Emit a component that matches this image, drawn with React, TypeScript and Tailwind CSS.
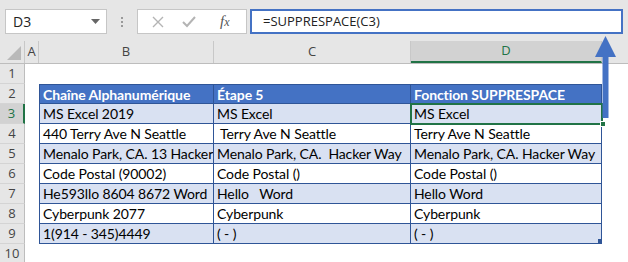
const rows: { b: string; c: string; d: string }[] = [
  { b: 'MS Excel 2019', c: 'MS Excel', d: 'MS Excel' },
  { b: '440 Terry Ave N Seattle', c: ' Terry Ave N Seattle', d: 'Terry Ave N Seattle' },
  { b: 'Menalo Park, CA. 13 Hacker Way', c: 'Menalo Park, CA.  Hacker Way', d: 'Menalo Park, CA. Hacker Way' },
  { b: 'Code Postal (90002)', c: 'Code Postal ()', d: 'Code Postal ()' },
  { b: 'He593llo 8604 8672 Word', c: 'Hello   Word', d: 'Hello Word' },
  { b: 'Cyberpunk 2077', c: 'Cyberpunk', d: 'Cyberpunk' },
  { b: '1(914 - 345)4449', c: '( - )', d: '( - )' },
]

const cellFont = "font-['Lato','Liberation_Sans',sans-serif] text-[14px] tracking-[-0.1px] whitespace-pre overflow-hidden"

function RowHead({ n, active }: { n: number; active?: boolean }) {
  return (
    <div
      className={
        'h-[20px] flex items-center justify-center border-b border-[#d4d4d4] text-[13px] ' +
        (active
          ? 'bg-[#d2d2d2] text-[#217346] border-r-2 border-r-[#217346]'
          : 'bg-[#e6e6e6] text-[#444] border-r border-r-[#bdbdbd]')
      }
    >
      {n}
    </div>
  )
}

export default function App() {
  return (
    <div className="relative w-[628px] h-[262px] overflow-hidden bg-white font-['Open_Sans','Noto_Sans',sans-serif]">
      {/* formula bar */}
      <div className="h-[41px] bg-[#e6e6e6] flex items-start pt-[9px] pl-[5px]">
        <div className="w-[102px] h-[25px] bg-white border border-[#c6c6c6] flex items-center justify-between pl-[7px] pr-[6px] text-[14px] text-[#222]">
          <span>D3</span>
          <svg width="9" height="5" viewBox="0 0 9 5">
            <path d="M0 0h9L4.5 5z" fill="#666" />
          </svg>
        </div>
        <div className="w-[30px] h-[25px] flex flex-col items-center justify-center gap-[2px]">
          <span className="w-[2px] h-[2px] bg-[#999]" />
          <span className="w-[2px] h-[2px] bg-[#999]" />
          <span className="w-[2px] h-[2px] bg-[#999]" />
        </div>
        <div className="w-[110px] h-[25px] bg-white border border-[#c6c6c6] flex items-center pl-[14px] gap-[18px]">
          <svg width="12" height="12" viewBox="0 0 12 12">
            <path d="M1 1l10 10M11 1L1 11" stroke="#b4b4b4" strokeWidth="1.4" />
          </svg>
          <svg width="14" height="12" viewBox="0 0 14 12">
            <path d="M1 6l4 4 8-9" stroke="#b4b4b4" strokeWidth="2" fill="none" />
          </svg>
          <span className="ml-[6px] font-['Liberation_Serif',serif] italic text-[15px] text-[#555]">
            f<span className="text-[12px]">x</span>
          </span>
        </div>
        <div className="ml-[3px] w-[373px] h-[25px] bg-white border-2 border-[#4472c4] flex items-center pl-[11px] text-[13px] text-[#222] font-['Open_Sans','Liberation_Sans',sans-serif]">
          =SUPPRESPACE(C3)
        </div>
      </div>

      {/* column headers */}
      <div className="h-[23px] flex bg-[#e6e6e6] border-b border-[#bdbdbd] text-[13px] text-[#444]">
        <div className="w-[25px] border-r border-[#c8c8c8] flex items-end justify-end p-[3px]">
          <svg width="14" height="14" viewBox="0 0 14 14">
            <path d="M14 0v14H0z" fill="#b9b9b9" />
          </svg>
        </div>
        <div className="w-[14px] border-r border-[#c8c8c8] flex items-center justify-center">A</div>
        <div className="w-[175px] border-r border-[#c8c8c8] flex items-center justify-center">B</div>
        <div className="w-[197px] border-r border-[#c8c8c8] flex items-center justify-center">C</div>
        <div className="w-[191px] bg-[#d2d2d2] border-r border-[#c8c8c8] border-b-2 border-b-[#217346] text-[#217346] flex items-center justify-center">
          D
        </div>
        <div className="flex-1" />
      </div>

      {/* sheet body */}
      <div className="grid grid-cols-[25px_14px_175px_197px_191px_1fr]">
        <RowHead n={1} />
        <div className="col-span-5 h-[20px]" />

        <RowHead n={2} />
        <div className="h-[20px]" />
        {['Chaîne Alphanumérique', 'Étape 5', 'Fonction SUPPRESPACE'].map((t, i) => (
          <div
            key={t}
            className={
              cellFont +
              ' h-[20px] bg-[#4472c4] text-white font-bold pl-[3px] leading-[20px] border-t border-b border-r border-[#2f5597] ' +
              (i === 0 ? 'border-l' : '')
            }
          >
            {t}
          </div>
        ))}
        <div className="h-[20px]" />

        {rows.map((r, i) => {
          const tint = i % 2 === 0 ? 'bg-[#d9e1f2]' : 'bg-white'
          const base = cellFont + ' h-[20px] text-black pl-[3px] leading-[20px] border-b border-r border-[#2f5597] ' + tint
          return (
            <div key={i} className="contents">
              <RowHead n={i + 3} active={i === 0} />
              <div className="h-[20px]" />
              <div className={base + ' border-l'}>{r.b}</div>
              <div className={base}>{r.c}</div>
              <div className={base}>{r.d}</div>
              <div className="h-[20px]" />
            </div>
          )
        })}

        <RowHead n={10} />
        <div className="col-span-5 h-[20px]" />
      </div>

      {/* selection around D3 */}
      <div className="absolute left-[410px] top-[103px] w-[193px] h-[22px] border-2 border-[#217346]" />
      <div className="absolute left-[600px] top-[121px] w-[6px] h-[6px] bg-[#217346] border border-white" />
      {/* table resize corner */}
      <div className="absolute left-[598px] top-[239px] w-[4px] h-[4px] bg-[#2f5597]" />

      {/* arrow */}
      <svg className="absolute left-[594px] top-[35px]" width="24" height="85" viewBox="0 0 24 85">
        <path d="M8.5 20h6v63h-6z" fill="#4472c4" />
        <path d="M11.5 1L22 22H1z" fill="#4472c4" />
      </svg>
    </div>
  )
}
